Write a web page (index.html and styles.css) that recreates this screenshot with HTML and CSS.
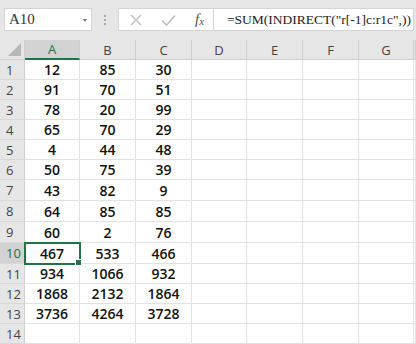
FILE: index.html
```html
<!DOCTYPE html>
<html lang="en">
<head>
    <meta charset="UTF-8">
    <title>Sheet</title>
    <link rel="stylesheet" href="styles.css">
</head>
<body>
    <div class="toolbar">
        <div class="name-box">
            <span>A10</span>
            <span class="arrow"></span>
        </div>
        <div class="grip"><i></i><i></i><i></i></div>
        <div class="fx-box">
            <span class="btn">
                <svg width="12" height="12" viewBox="0 0 12 12"><path d="M1 1 L11 11 M11 1 L1 11" stroke="#bdbdbd" stroke-width="1.3" fill="none"/></svg>
            </span>
            <span class="btn">
                <svg width="15" height="12" viewBox="0 0 15 12"><path d="M1 6.5 L5.5 11 L14 1.5" stroke="#bdbdbd" stroke-width="1.6" fill="none"/></svg>
            </span>
            <span class="fx">f<sub>x</sub></span>
        </div>
        <div class="formula">=SUM(INDIRECT("r[-1]c:r1c",))</div>
    </div>

    <div class="sheet" id="sheet">
        <div class="corner"><span></span></div>
    </div>

    <script>
        const cols = ['A', 'B', 'C', 'D', 'E', 'F', 'G', ''];
        const data = [
            [12, 85, 30], [91, 70, 51], [78, 20, 99], [65, 70, 29],
            [4, 44, 48], [50, 75, 39], [43, 82, 9], [64, 85, 85],
            [60, 2, 76], [467, 533, 466], [934, 1066, 932],
            [1868, 2132, 1864], [3736, 4264, 3728], []
        ];
        const sheet = document.getElementById('sheet');

        cols.forEach((c, i) => {
            const h = document.createElement('div');
            h.className = 'col-head' + (i === 0 ? ' sel' : '');
            h.textContent = c;
            sheet.appendChild(h);
        });

        data.forEach((row, r) => {
            const rh = document.createElement('div');
            rh.className = 'row-head' + (r === 9 ? ' sel' : '');
            rh.textContent = r + 1;
            sheet.appendChild(rh);
            cols.forEach((c, i) => {
                const cell = document.createElement('div');
                cell.className = 'cell' + (r === 9 && i === 0 ? ' active' : '');
                cell.textContent = row[i] !== undefined ? row[i] : '';
                sheet.appendChild(cell);
            });
        });
    </script>
</body>
</html>
```

FILE: styles.css
```css
body {
    margin: 0;
    width: 416px;
    height: 344px;
    overflow: hidden;
    background: #e6e6e6;
    font-family: "Open Sans", sans-serif;
}

.toolbar {
    height: 40px;
    box-sizing: border-box;
    padding: 8px 0 9px 4px;
    display: flex;
    align-items: stretch;
}

.name-box {
    flex-shrink: 0;
    width: 88px;
    box-sizing: border-box;
    background: #fff;
    border: 1px solid #d4d4d4;
    display: flex;
    align-items: center;
    justify-content: space-between;
    padding: 0 4px 0 4px;
    font-family: "Liberation Serif", serif;
    font-size: 15px;
    color: #333;
}

.name-box .arrow {
    width: 0;
    height: 0;
    border-left: 2.5px solid transparent;
    border-right: 2.5px solid transparent;
    border-top: 3px solid #777;
    margin-top: 1px;
}

.grip {
    flex-shrink: 0;
    width: 26px;
    display: flex;
    flex-direction: column;
    align-items: center;
    justify-content: center;
    gap: 2px;
}

.grip i {
    width: 2px;
    height: 2px;
    background: #aaa;
}

.fx-box {
    flex-shrink: 0;
    width: 96px;
    box-sizing: border-box;
    background: #fff;
    border: 1px solid #d4d4d4;
    display: flex;
    align-items: center;
    padding-left: 11px;
}

.btn {
    width: 31px;
    display: flex;
    align-items: center;
    justify-content: flex-start;
}

.fx {
    font-family: "Liberation Serif", serif;
    font-style: italic;
    font-size: 15px;
    color: #555;
    margin-left: 3px;
}

.fx sub {
    font-size: 11px;
    vertical-align: -1px;
}

.formula {
    flex: 1;
    min-width: 0;
    white-space: nowrap;
    background: #fff;
    border: 1px solid #d4d4d4;
    border-left: none;
    margin-right: 2px;
    display: flex;
    align-items: center;
    padding-left: 13px;
    font-family: "Liberation Serif", serif;
    font-size: 13.5px;
    color: #222;
}

.sheet {
    display: grid;
    grid-template-columns: 25px 55px 56px 56px 55px 56px 56px 55px 2px;
    grid-template-rows: 20px repeat(6, 20px) repeat(4, 21px) repeat(4, 20px);
    background: #fff;
}

.corner {
    background: #e6e6e6;
    border-right: 1px solid #cfcfcf;
    border-bottom: 1px solid #cfcfcf;
    position: relative;
}

.corner span {
    position: absolute;
    right: 3px;
    bottom: 3px;
    width: 0;
    height: 0;
    border-left: 13px solid transparent;
    border-bottom: 13px solid #b7b7b7;
}

.col-head {
    background: #e6e6e6;
    border-right: 1px solid #cfcfcf;
    border-bottom: 1px solid #cfcfcf;
    display: flex;
    align-items: center;
    justify-content: center;
    font-size: 13px;
    color: #444;
}

.col-head.sel {
    background: #d2d2d2;
    color: #217346;
    border-bottom: 2px solid #217346;
}

.row-head {
    background: #e6e6e6;
    border-right: 1px solid #cfcfcf;
    border-bottom: 1px solid #d8d8d8;
    display: flex;
    align-items: center;
    padding-left: 6px;
    font-size: 13px;
    color: #444;
}

.row-head.sel {
    background: #d2d2d2;
    color: #217346;
}

.cell {
    border-right: 1px solid #e1e1e1;
    border-bottom: 1px solid #e1e1e1;
    display: flex;
    align-items: center;
    justify-content: center;
    font-size: 14px;
    font-weight: 600;
    color: #111;
}

.cell.active {
    position: relative;
    outline: 2px solid #217346;
    outline-offset: -1px;
}

.cell.active::after {
    content: "";
    position: absolute;
    right: -3px;
    bottom: -3px;
    width: 5px;
    height: 5px;
    background: #217346;
    border: 1px solid #fff;
}
```
